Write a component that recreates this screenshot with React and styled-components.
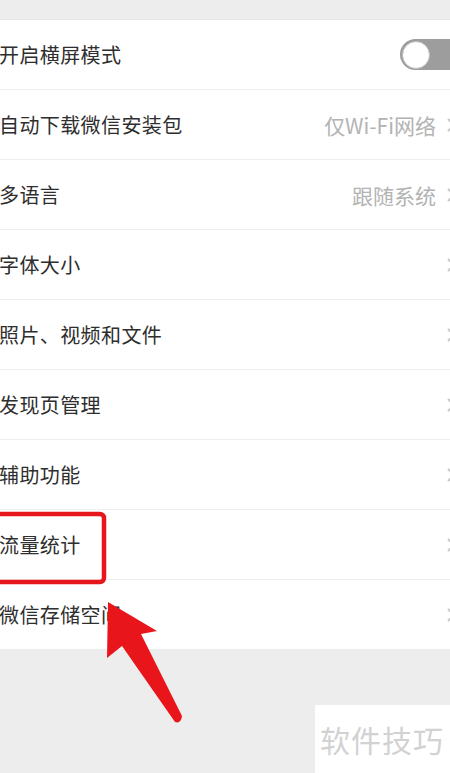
import React from 'react'
import styled, { createGlobalStyle } from 'styled-components'

const GlobalStyle = createGlobalStyle`
  html, body {
    margin: 0;
    padding: 0;
    background: #ededed;
  }
  body {
    font-family: "Noto Sans CJK SC", "Noto Sans", sans-serif;
  }
`

const Page = styled.div`
  position: relative;
  width: 450px;
  height: 773px;
  overflow: hidden;
  background: #ededed;
  padding-top: 19px;
  box-sizing: border-box;
`

const List = styled.div`
  background: #fff;
  border-top: 1px solid #e6e6e6;
`

const Row = styled.div`
  display: flex;
  align-items: center;
  justify-content: space-between;
  height: 69px;
  overflow: hidden;
  border-bottom: ${(p) => (p.last ? '0' : '1px solid #efefef')};
`

const Label = styled.span`
  font-size: 20px;
  color: #2e2e2e;
  letter-spacing: 0.4px;
  white-space: nowrap;
  margin-left: -1px;
`

const Trailing = styled.div`
  display: flex;
  align-items: center;
  gap: 9px;
  margin-right: -5px;
`

const Value = styled.span`
  font-size: 21px;
  color: #b3b3b3;
  white-space: nowrap;
`

const Track = styled.div`
  width: 64px;
  height: 31px;
  border-radius: 16px;
  background: #9d9d9d;
  display: flex;
  align-items: center;
  padding-left: 2px;
  box-sizing: border-box;
  margin-right: -14px;
`

const Knob = styled.div`
  width: 26px;
  height: 26px;
  border-radius: 50%;
  background: #fff;
  border: 1px solid #bdbdbd;
`

const Overlay = styled.svg`
  position: absolute;
  left: 0;
  top: 0;
  pointer-events: none;
`

const Watermark = styled.div`
  position: absolute;
  left: 315px;
  top: 705px;
  width: 135px;
  height: 68px;
  background: #fff;
  display: flex;
  align-items: center;
  padding-left: 5px;
  box-sizing: border-box;
  font-size: 30px;
  color: #d2d2d2;
  letter-spacing: 1px;
  white-space: nowrap;
`

const Chevron = () => (
  <svg width="10" height="16" viewBox="0 0 10 16">
    <path d="M3 2 L9 8 L3 14" fill="none" stroke="#c8c8c8" strokeWidth="2" />
  </svg>
)

const rows = [
  { label: '开启横屏模式', toggle: true },
  { label: '自动下载微信安装包', value: '仅Wi-Fi网络' },
  { label: '多语言', value: '跟随系统' },
  { label: '字体大小' },
  { label: '照片、视频和文件' },
  { label: '发现页管理' },
  { label: '辅助功能' },
  { label: '流量统计' },
  { label: '微信存储空间' },
]

export default function App() {
  return (
    <>
      <GlobalStyle />
      <Page>
        <List>
          {rows.map((r, i) => (
            <Row key={r.label} last={i === rows.length - 1}>
              <Label>{r.label}</Label>
              {r.toggle ? (
                <Track>
                  <Knob />
                </Track>
              ) : (
                <Trailing>
                  {r.value && <Value>{r.value}</Value>}
                  <Chevron />
                </Trailing>
              )}
            </Row>
          ))}
        </List>
        <Overlay width="450" height="773" viewBox="0 0 450 773">
          <rect x="-10" y="514" width="114" height="68" rx="4" fill="none" stroke="#e5161c" strokeWidth="4.5" />
          <path
            d="M108 602 L157 631 L141 634 L182 716 Q181 724 175 722 L122 646 L107 658 Z"
            fill="#e8161b"
          />
        </Overlay>
        <Watermark>软件技巧</Watermark>
      </Page>
    </>
  )
}
